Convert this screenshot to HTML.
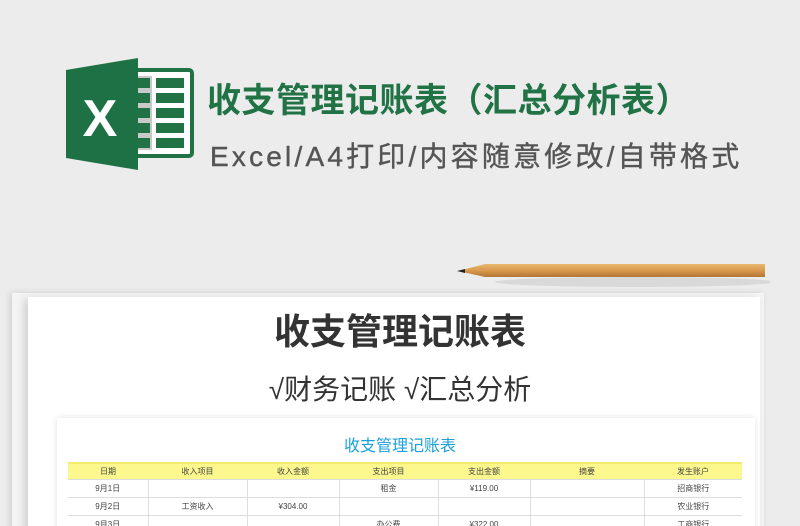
<!DOCTYPE html>
<html><head><meta charset="utf-8"><style>
html,body{margin:0;width:800px;height:526px;overflow:hidden}
body{background:#ececec;font-family:"Liberation Sans","Noto Sans CJK SC",sans-serif;position:relative}
.a{position:absolute}
.t1{left:207px;top:73px;font-size:34px;font-weight:bold;color:#217346;letter-spacing:0.5px;white-space:nowrap}
.t2{left:210px;top:135px;font-size:28px;color:#555;letter-spacing:3.2px;white-space:nowrap;-webkit-text-stroke:0.4px #555}
.back{left:12px;top:293px;width:752px;height:240px;background:#f4f4f4;box-shadow:-2px 0 6px rgba(0,0,0,.12)}
.front{left:28px;top:297px;width:732px;height:240px;background:#fff;box-shadow:-4px 2px 8px rgba(0,0,0,.15)}
.card{left:57px;top:418px;width:698px;height:120px;background:#fff;box-shadow:0 0 6px rgba(0,0,0,.12)}
table{border-collapse:collapse;position:absolute;left:68px;top:462px;width:674px;font-size:8px;color:#444;font-family:"Liberation Sans","Noto Sans CJK SC",sans-serif}
td{height:17px;border-bottom:1px solid #ddd;border-left:1px solid #ddd;text-align:center;padding:0}
tr.h td{background:#fdf88e;border-left:none;border-top:2px solid #f2ec6a;height:15px}
td:first-child{border-left:none}
</style></head><body>
<svg class="a" style="left:66px;top:58px" width="128" height="112" viewBox="0 0 128 112">
<rect x="62" y="12" width="64" height="86" rx="3" fill="#fff" stroke="#217346" stroke-width="4"/>
<rect x="68" y="18" width="18" height="74" fill="#c9c9c9"/>
<g fill="#217346"><rect x="70" y="20" width="14" height="10"/><rect x="70" y="35" width="14" height="10"/><rect x="70" y="50" width="14" height="10"/><rect x="70" y="65" width="14" height="10"/><rect x="70" y="80" width="14" height="10"/>
<rect x="90" y="20" width="28" height="10"/><rect x="90" y="35" width="28" height="10"/><rect x="90" y="50" width="28" height="10"/><rect x="90" y="65" width="28" height="10"/><rect x="90" y="80" width="28" height="10"/></g>
<polygon points="0,12 72,0 72,112 0,100" fill="#1e7145"/>
<text x="34" y="78" font-size="52" font-weight="bold" fill="#fff" text-anchor="middle" font-family="Liberation Sans,sans-serif">X</text>
</svg>
<div class="a t1">收支管理记账表（汇总分析表）</div>
<div class="a t2">Excel/A4打印/内容随意修改/自带格式</div>
<div class="a back"></div>
<div class="a front"></div>
<svg class="a" style="left:455px;top:258px" width="315" height="32">
<defs><linearGradient id="g" x1="0" y1="0" x2="0" y2="1"><stop offset="0" stop-color="#e9b870"/><stop offset=".5" stop-color="#d99a4c"/><stop offset="1" stop-color="#b27633"/></linearGradient></defs>
<ellipse cx="180" cy="24" rx="140" ry="5" fill="rgba(0,0,0,.08)"/>
<polygon points="3,13 30,6 310,6 310,19 30,19" fill="url(#g)"/>
<polygon points="2,13 10,11 10,15" fill="#222"/>
</svg>
<div class="a" style="left:0;width:800px;top:303px;text-align:center;font-size:36px;font-weight:bold;color:#333">收支管理记账表</div>
<div class="a" style="left:0;width:800px;top:368px;text-align:center;font-size:28px;color:#333">√财务记账 √汇总分析</div>
<div class="a card"></div>
<div class="a" style="left:0;width:800px;top:432px;text-align:center;font-size:16px;color:#1aa0dc">收支管理记账表</div>
<table>
<colgroup><col style="width:80px"><col style="width:99px"><col style="width:92px"><col style="width:99px"><col style="width:92px"><col style="width:114px"><col style="width:98px"></colgroup>
<tr class="h"><td>日期</td><td>收入项目</td><td>收入金额</td><td>支出项目</td><td>支出金额</td><td>摘要</td><td>发生账户</td></tr>
<tr><td>9月1日</td><td></td><td></td><td>租金</td><td>¥119.00</td><td></td><td>招商银行</td></tr>
<tr><td>9月2日</td><td>工资收入</td><td>¥304.00</td><td></td><td></td><td></td><td>农业银行</td></tr>
<tr><td>9月3日</td><td></td><td></td><td>办公费</td><td>¥322.00</td><td></td><td>工商银行</td></tr>
</table>
</body></html>
